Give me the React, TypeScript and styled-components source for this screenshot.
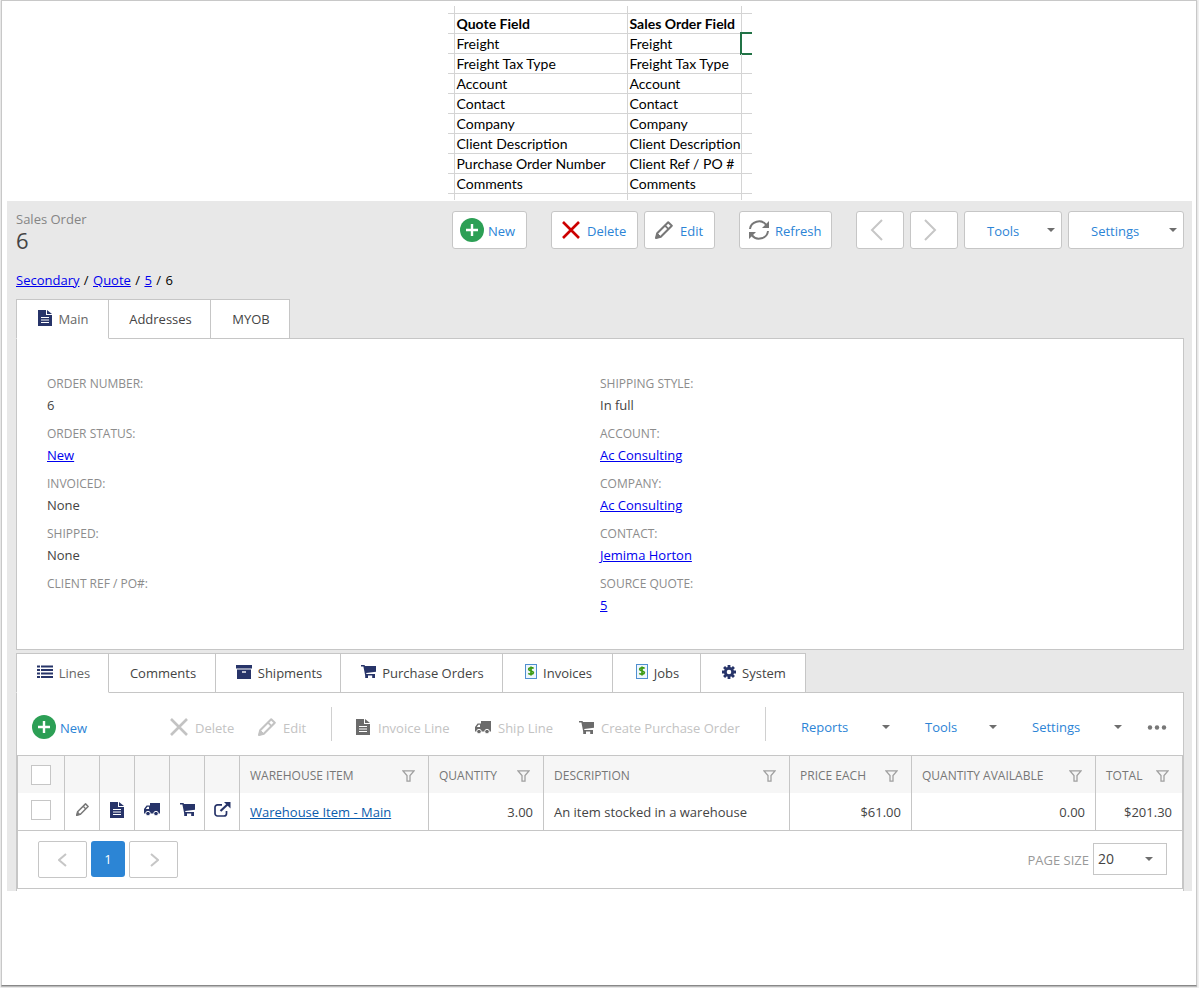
import React, { useState } from "react";
import styled, { createGlobalStyle, css } from "styled-components";

const line = "#c6c6c6";
const blue = "#2c84d6";
const navy = "#273469";

const GlobalStyle = createGlobalStyle`
  *, *::before, *::after { box-sizing: border-box; }
  body { margin: 0; background: #f0f0f0; }
  body, button, select, input {
    font-family: "Open Sans", "Noto Sans", sans-serif;
    font-size: 13px;
    line-height: 20px;
    color: #444;
  }
  a { color: #0000ee; }
`;

const Frame = styled.main`
  margin: 0 2px 2px 1px;
  min-height: calc(100vh - 2px);
  padding: 5px 4px 0 5px;
  background: #fff;
  border: 1px solid #c8c8c8;
  border-bottom-color: #888;
  box-shadow: 0 1px 1px #bbb;
`;

/* ---------- field mapping sheet ---------- */

const Sheet = styled.table`
  margin: 0 auto 1px;
  border-collapse: separate;
  border-spacing: 0;
  font-family: Lato, sans-serif;
  font-size: 14px;
  color: #000;
`;

const SheetCell = styled.td<{ $w?: number; $h?: number }>`
  position: relative;
  width: ${(p) => (p.$w ? `${p.$w}px` : "auto")};
  height: ${(p) => p.$h ?? 20}px;
  padding: 0 0 0 2px;
  border-right: 1px solid #d4d4d4;
  border-bottom: 1px solid #d4d4d4;
  line-height: 18px;
  text-align: left;
  white-space: nowrap;
  &:first-child, &:last-child { padding: 0; }
  &:last-child { border-right: 0; }
  tbody > tr:last-child > & { border-bottom: 0; }
`;

const SelectedEdge = styled.span`
  position: absolute;
  inset: -2px 0 -2px -2px;
  border: 2px solid #217346;
  border-right: 0;
`;

/* ---------- order screen ---------- */

const Screen = styled.section`
  padding: 10px 8px 0 9px;
  background: #e8e8e8;
`;

const Header = styled.header`
  display: flex;
  justify-content: space-between;
  align-items: flex-start;
  height: 58px;
`;

const Title = styled.h1`
  margin: 0;
  font-size: 22px;
  line-height: 24px;
  font-weight: 400;
  color: #444;
`;

const Kind = styled.span`
  display: block;
  font-size: 13px;
  line-height: 16px;
  margin-bottom: 1px;
  color: #858585;
`;

const Group = styled.div<{ $gap: number }>`
  display: flex;
  gap: ${(p) => p.$gap}px;
`;

const Button = styled.button<{ $w: number; $menu?: boolean }>`
  display: flex;
  align-items: center;
  justify-content: ${(p) => (p.$menu ? "space-between" : "flex-start")};
  gap: 7px;
  width: ${(p) => p.$w}px;
  height: 38px;
  padding: ${(p) => (p.$menu ? "0 6px 0 22px" : "0 0 0 10px")};
  background: #fff;
  border: 1px solid ${line};
  border-radius: 3px;
  color: ${blue};
  white-space: nowrap;
  cursor: pointer;
  & > span { padding-top: 2px; }
`;

const NewButton = styled(Button)`
  gap: 4px;
  padding-left: 7px;
`;

const RefreshButton = styled(Button)`
  gap: 6px;
  padding-left: 9px;
`;

const StepButton = styled(Button)`
  justify-content: center;
  padding: 0 7px 0 0;
`;

const Crumbs = styled.nav`
  height: 30px;
  line-height: 22px;
  color: #000;
`;

const Slash = styled.span`
  margin: 0 1px;
`;

const Tabs = styled.div`
  display: flex;
  margin-bottom: -1px;
`;

const Tab = styled.button<{ $w: number; $active?: boolean }>`
  display: flex;
  align-items: center;
  justify-content: center;
  gap: 6px;
  width: ${(p) => p.$w}px;
  height: 40px;
  padding: 0 0 0 2px;
  background: #fff;
  border: 1px solid ${line};
  white-space: nowrap;
  cursor: pointer;
  & + & { margin-left: -1px; }
  & svg { margin-top: -3px; }
  ${(p) =>
    p.$active &&
    css`
      position: relative;
      border-bottom-color: #fff;
      color: #666;
    `}
`;

const Details = styled.div`
  display: grid;
  grid-template-columns: 1fr 1fr;
  margin-bottom: 3px;
  padding: 30px;
  background: #fff;
  border: 1px solid ${line};
`;

const FieldList = styled.dl`
  margin: 0;
`;

const Field = styled.div`
  height: 50px;
  padding-top: 4px;
`;

const FieldName = styled.dt`
  font-size: 12px;
  line-height: 22px;
  color: #8c8c8c;
`;

const FieldValue = styled.dd`
  margin: 0;
  line-height: 20px;
`;

const Lines = styled.div`
  padding-bottom: 2px;
  background: #fff;
  border: 1px solid ${line};
  border-bottom: 0;
`;

const LineBar = styled.div`
  display: flex;
  align-items: center;
  height: 62px;
  padding: 6px 16px 0 15px;
`;

const Spacer = styled.div`
  flex: 1;
`;

const FlatButton = styled.button<{ $w: number; $gap?: number; $menu?: boolean }>`
  display: flex;
  align-items: center;
  justify-content: ${(p) => (p.$menu ? "space-between" : "flex-start")};
  gap: ${(p) => p.$gap ?? 7}px;
  width: ${(p) => p.$w}px;
  height: 32px;
  padding: 0;
  background: none;
  border: 0;
  color: ${blue};
  white-space: nowrap;
  cursor: pointer;
  &:disabled { color: #c3c3c3; cursor: default; }
  & > span { padding-top: ${(p) => (p.$menu ? 0 : 2)}px; }
`;

const Divider = styled.div`
  width: 1px;
  height: 34px;
  margin: 0 24px 6px;
  background: #d0d0d0;
`;

const MenuRow = styled.div`
  display: flex;
  align-items: center;
  gap: 35px;
`;

const MoreButton = styled.button`
  display: flex;
  padding: 0;
  margin-left: 25px;
  background: none;
  border: 0;
  cursor: pointer;
`;

const Grid = styled.div`
  border: 1px solid ${line};
`;

const LineTable = styled.table`
  width: 100%;
  table-layout: fixed;
  border-collapse: separate;
  border-spacing: 0;
`;

const HeadCell = styled.th<{ $w?: number }>`
  width: ${(p) => (p.$w ? `${p.$w}px` : "auto")};
  height: 37px;
  padding: 2px 10px 0;
  background: #f6f6f6;
  border-right: 1px solid ${line};
  font-size: 12px;
  font-weight: 400;
  text-align: left;
  white-space: nowrap;
  color: #777;
  &:last-child { border-right: 0; padding-right: 13px; }
`;

const HeadLabel = styled.span`
  display: flex;
  justify-content: space-between;
  align-items: center;
  padding-right: 3px;
  ${HeadCell}:last-child & { padding-right: 0; }
`;

const Cell = styled.td<{ $end?: boolean; $tool?: boolean }>`
  height: 38px;
  padding: ${(p) => (p.$tool ? "0" : "0 10px")};
  border-right: 1px solid ${line};
  border-bottom: 1px solid ${line};
  text-align: ${(p) => (p.$end ? "right" : "left")};
  white-space: nowrap;
  &:last-child { border-right: 0; }
`;

const CheckCell = styled(Cell)`
  padding: 0 0 3px;
`;

const ItemLink = styled.a`
  color: #0b5cad;
`;

const RowButton = styled.button`
  display: flex;
  align-items: center;
  justify-content: center;
  width: 100%;
  height: 32px;
  padding: 0 0 4px;
  background: none;
  border: 0;
  cursor: pointer;
`;

const Check = styled.input`
  display: block;
  appearance: none;
  width: 20px;
  height: 20px;
  margin: 0 auto;
  background: #fff;
  border: 1px solid ${line};
  &:checked { background: ${blue}; }
`;

const CheckHead = styled(HeadCell)`
  padding: 0;
`;

const Pager = styled.div`
  display: flex;
  justify-content: space-between;
  align-items: center;
  height: 57px;
  padding: 0 15px 0 20px;
`;

const PageButton = styled.button<{ $current?: boolean }>`
  display: flex;
  align-items: center;
  justify-content: center;
  width: ${(p) => (p.$current ? 34 : 49)}px;
  height: ${(p) => (p.$current ? 36 : 37)}px;
  padding: 0;
  background: ${(p) => (p.$current ? "#2c85d5" : "#fff")};
  border: ${(p) => (p.$current ? "0" : `1px solid ${line}`)};
  border-radius: ${(p) => (p.$current ? 3 : 2)}px;
  color: #fff;
  cursor: pointer;
`;

const SizeLabel = styled.label`
  display: flex;
  align-items: center;
  gap: 4px;
  color: #999;
`;

const SelectBox = styled.span`
  display: grid;
  align-items: center;
  margin-bottom: 2px;
  & > * { grid-area: 1 / 1; }
  & > svg { justify-self: end; margin-right: 14px; pointer-events: none; }
`;

const Select = styled.select`
  appearance: none;
  width: 74px;
  height: 32px;
  padding: 0 4px;
  background: #fff;
  border: 1px solid ${line};
  border-radius: 0;
  font-size: 14px;
`;

/* ---------- icons ---------- */

const PlusIcon = () => (
  <svg width="24" height="24" viewBox="0 0 24 24" aria-hidden="true">
    <circle cx="12" cy="12" r="12" fill="#2c9f55" />
    <path d="M12 6v12M6 12h12" stroke="#fff" strokeWidth="2.4" />
  </svg>
);

const CrossIcon = ({ color = "#cc0000" }: { color?: string }) => (
  <svg width="18" height="18" viewBox="0 0 18 18" aria-hidden="true">
    <path d="M1 1l16 16M17 1L1 17" stroke={color} strokeWidth="2.6" />
  </svg>
);

const PencilIcon = ({ color = "#777", size = 18 }: { color?: string; size?: number }) => (
  <svg width={size} height={size} viewBox="0 0 18 18" fill="none" stroke={color} aria-hidden="true">
    <path d="M2.2 12.2L13.2 1.2l3.6 3.6-11 11L1 17z" strokeWidth="2" strokeLinejoin="round" />
    <path d="M10 4.6l3.6 3.6" strokeWidth="1.8" />
    <path d="M1 17l1.2-4.8 3.6 3.6z" fill={color} strokeWidth="1" />
  </svg>
);

const RefreshIcon = () => (
  <svg width="20" height="20" viewBox="0 0 20 20" fill="none" stroke="#777" strokeWidth="2" aria-hidden="true">
    <path d="M1 9a9 8.4 0 0 1 16.2-4.2M19 11a9 8.4 0 0 1-16.2 4.2" />
    <path d="M20 1v7h-7zM0 19v-7h7z" fill="#777" stroke="none" />
  </svg>
);

const Chevron = ({ dir, size }: { dir: "left" | "right"; size: "big" | "small" }) => {
  const big = size === "big";
  return (
    <svg width={big ? 13 : 10} height={big ? 22 : 14} viewBox={big ? "0 0 13 22" : "0 0 10 14"} aria-hidden="true">
      <path
        d={
          big
            ? dir === "left" ? "M12 1L2 11l10 10" : "M1 1l10 10L1 21"
            : dir === "left" ? "M8 1L1 7l7 6" : "M2 1l7 6-7 6"
        }
        fill="none"
        stroke="#c6c6c6"
        strokeWidth="2"
      />
    </svg>
  );
};

const Caret = () => (
  <svg width="8" height="4" viewBox="0 0 8 4" aria-hidden="true">
    <path d="M0 0h8L4 4z" fill="#6e6e6e" />
  </svg>
);

const FileIcon = ({ color = navy }: { color?: string }) => (
  <svg width="14" height="16" viewBox="0 0 14 16" aria-hidden="true">
    <path d="M0 0h8v5h6v11H0zM9 0l5 4H9z" fill={color} />
    <path d="M3 7.5h8M3 10h8M3 12.5h8" stroke="#fff" strokeWidth="1" />
  </svg>
);

const ListIcon = () => (
  <svg width="16" height="13" viewBox="0 0 16 13" aria-hidden="true">
    <path d="M0 1.5h3M0 5h3M0 8.5h3M0 12h3M4 1.5h12M4 5h12M4 8.5h12M4 12h12" stroke={navy} strokeWidth="2" />
  </svg>
);

const BoxIcon = () => (
  <svg width="16" height="14" viewBox="0 0 16 14" aria-hidden="true">
    <path d="M0 0h16v3.6H0zM1 4.6h14V14H1z" fill={navy} />
    <path d="M6 7h4" stroke="#fff" strokeWidth="1.4" />
  </svg>
);

const CartIcon = ({ color = navy }: { color?: string }) => (
  <svg width="15" height="13" viewBox="0 0 15 13" fill={color} aria-hidden="true">
    <path d="M0 0h3.6l.3 1H15v5.8L5.2 8l.2 1H14v1.4H4.2L2.4 1.4H0z" />
    <path d="M4.2 10H7v3H4.200zM11.2 10H14v3h-2.800z" />
  </svg>
);

const TruckIcon = ({ color = navy }: { color?: string }) => (
  <svg width="16" height="13" viewBox="0 0 16 13" aria-hidden="true">
    <path d="M6 0h10v10.5H0V6l2.6-3.5H6z" fill={color} />
    <path d="M1.8 6l1.6-2.2H5V6z" fill="#fff" />
    <circle cx="4" cy="10.6" r="2.3" fill={color} stroke="#fff" strokeWidth="1" />
    <circle cx="12" cy="10.6" r="2.3" fill={color} stroke="#fff" strokeWidth="1" />
  </svg>
);

const OpenIcon = () => (
  <svg width="17" height="15" viewBox="0 0 17 15" aria-hidden="true">
    <path
      d="M8 2.8H3.5A2.5 2.5 0 0 0 1 5.300v6.200A2.500 2.500 0 0 0 3.500 14H10a2.500 2.500 0 0 0 2.500-2.500V9"
      fill="none"
      stroke={navy}
      strokeWidth="1.7"
    />
    <path d="M6.5 9L14 2" stroke={navy} strokeWidth="2.2" />
    <path d="M10 0h6.500v6.500z" fill={navy} />
  </svg>
);

const MoneyIcon = () => (
  <svg width="12" height="16" viewBox="0 0 12 16" aria-hidden="true">
    <rect x=".5" y=".5" width="11" height="14" fill="#eef6fd" stroke="#4f8fd0" />
    <path
      d="M8.600 4.500C7.500 3.400 3.700 3.300 3.700 5.300c0 2.100 4.700 1.300 4.700 3.300 0 1.900-3.600 2-5.100.8M6 2.400v9.200"
      fill="none"
      stroke="#3c9a12"
      strokeWidth="1.7"
    />
  </svg>
);

const GearIcon = () => (
  <svg width="14" height="14" viewBox="0 0 14 14" fill="none" stroke={navy} aria-hidden="true">
    <circle cx="7" cy="7" r="3.7" strokeWidth="2.8" />
    <path
      d="M7 0v3M7 11v3M0 7h3M11 7h3M2.050 2.050l2 2M9.950 9.950l2 2M11.950 2.050l-2 2M4.050 9.950l-2 2"
      strokeWidth="2.8"
    />
  </svg>
);

const FunnelIcon = () => (
  <svg width="13" height="12" viewBox="0 0 13 12" aria-hidden="true">
    <path d="M1 .8h11L8 5.500v5.700H5V5.500z" fill="none" stroke="#a0a0a0" strokeWidth="1.3" />
  </svg>
);

const DotsIcon = () => (
  <svg width="20" height="5" viewBox="0 0 20 5" fill="#777" aria-hidden="true">
    <circle cx="3" cy="2.5" r="2.2" />
    <circle cx="10" cy="2.5" r="2.2" />
    <circle cx="17" cy="2.5" r="2.2" />
  </svg>
);

/* ---------- data ---------- */

const mapping = [
  ["Freight", "Freight"],
  ["Freight Tax Type", "Freight Tax Type"],
  ["Account", "Account"],
  ["Contact", "Contact"],
  ["Company", "Company"],
  ["Client Description", "Client Description"],
  ["Purchase Order Number", "Client Ref / PO #"],
  ["Comments", "Comments"],
];

type FieldData = { name: string; value: string; link?: boolean };

const leftFields: FieldData[] = [
  { name: "ORDER NUMBER:", value: "6" },
  { name: "ORDER STATUS:", value: "New", link: true },
  { name: "INVOICED:", value: "None" },
  { name: "SHIPPED:", value: "None" },
  { name: "CLIENT REF / PO#:", value: "" },
];

const rightFields: FieldData[] = [
  { name: "SHIPPING STYLE:", value: "In full" },
  { name: "ACCOUNT:", value: "Ac Consulting", link: true },
  { name: "COMPANY:", value: "Ac Consulting", link: true },
  { name: "CONTACT:", value: "Jemima Horton", link: true },
  { name: "SOURCE QUOTE:", value: "5", link: true },
];

type TabData = { label: string; w: number; icon?: React.ReactNode };

const orderTabs: TabData[] = [
  { label: "Main", w: 93, icon: <FileIcon /> },
  { label: "Addresses", w: 103 },
  { label: "MYOB", w: 80 },
];

const lineTabs: TabData[] = [
  { label: "Lines", w: 93, icon: <ListIcon /> },
  { label: "Comments", w: 108 },
  { label: "Shipments", w: 126, icon: <BoxIcon /> },
  { label: "Purchase Orders", w: 163, icon: <CartIcon /> },
  { label: "Invoices", w: 111, icon: <MoneyIcon /> },
  { label: "Jobs", w: 89, icon: <MoneyIcon /> },
  { label: "System", w: 106, icon: <GearIcon /> },
];

const columns = [
  { label: "WAREHOUSE ITEM", w: 189 },
  { label: "QUANTITY", w: 115 },
  { label: "DESCRIPTION" },
  { label: "PRICE EACH", w: 122 },
  { label: "QUANTITY AVAILABLE", w: 184 },
  { label: "TOTAL", w: 86 },
];

const rowTools = [
  { label: "Edit line", icon: <PencilIcon size={13} /> },
  { label: "Invoice line", icon: <FileIcon /> },
  { label: "Ship line", icon: <TruckIcon /> },
  { label: "Create purchase order", icon: <CartIcon /> },
  { label: "Open line", icon: <OpenIcon /> },
];

/* ---------- parts ---------- */

const TabStrip = ({ tabs, label }: { tabs: TabData[]; label: string }) => {
  const [active, setActive] = useState(0);
  return (
    <Tabs role="tablist" aria-label={label}>
      {tabs.map((t, i) => (
        <Tab
          key={t.label}
          type="button"
          role="tab"
          aria-selected={i === active}
          $w={t.w}
          $active={i === active}
          onClick={() => setActive(i)}
        >
          {t.icon}
          <span>{t.label}</span>
        </Tab>
      ))}
    </Tabs>
  );
};

const Fields = ({ items }: { items: FieldData[] }) => (
  <FieldList>
    {items.map((f) => (
      <Field key={f.name}>
        <FieldName>{f.name}</FieldName>
        <FieldValue>{f.link ? <a href="#">{f.value}</a> : f.value}</FieldValue>
      </Field>
    ))}
  </FieldList>
);

const FieldSheet = () => (
  <Sheet>
    <thead>
      <tr>
        <SheetCell $w={7} $h={8} />
        <SheetCell $w={173} $h={8} />
        <SheetCell $w={114} $h={8} />
        <SheetCell $w={10} $h={8} />
      </tr>
      <tr>
        <SheetCell />
        <SheetCell as="th" scope="col">Quote Field</SheetCell>
        <SheetCell as="th" scope="col">Sales Order Field</SheetCell>
        <SheetCell />
      </tr>
    </thead>
    <tbody>
      {mapping.map(([from, to], i) => (
        <tr key={from}>
          <SheetCell />
          <SheetCell>{from}</SheetCell>
          <SheetCell>{to}</SheetCell>
          <SheetCell>{i === 0 && <SelectedEdge />}</SheetCell>
        </tr>
      ))}
      <tr>
        <SheetCell $h={6} />
        <SheetCell $h={6} />
        <SheetCell $h={6} />
        <SheetCell $h={6} />
      </tr>
    </tbody>
  </Sheet>
);

export default function App() {
  return (
    <>
      <GlobalStyle />
      <Frame>
        <FieldSheet />
        <Screen>
          <Header>
            <Title>
              <Kind>Sales Order</Kind>6
            </Title>
            <Group $gap={24}>
              <NewButton type="button" $w={75}><PlusIcon /><span>New</span></NewButton>
              <Group $gap={6}>
                <Button type="button" $w={87}><CrossIcon /><span>Delete</span></Button>
                <Button type="button" $w={71}><PencilIcon /><span>Edit</span></Button>
              </Group>
              <RefreshButton type="button" $w={93}><RefreshIcon /><span>Refresh</span></RefreshButton>
              <Group $gap={6}>
                <StepButton type="button" $w={48} aria-label="Previous order">
                  <Chevron dir="left" size="big" />
                </StepButton>
                <StepButton type="button" $w={48} aria-label="Next order">
                  <Chevron dir="right" size="big" />
                </StepButton>
                <Button type="button" $w={98} $menu aria-haspopup="menu"><span>Tools</span><Caret /></Button>
                <Button type="button" $w={116} $menu aria-haspopup="menu"><span>Settings</span><Caret /></Button>
              </Group>
            </Group>
          </Header>
          <Crumbs aria-label="Breadcrumb">
            <a href="#">Secondary</a> <Slash>/</Slash> <a href="#">Quote</a> <Slash>/</Slash>{" "}
            <a href="#">5</a> <Slash>/</Slash> 6
          </Crumbs>

          <TabStrip tabs={orderTabs} label="Order" />
          <Details>
            <Fields items={leftFields} />
            <Fields items={rightFields} />
          </Details>

          <TabStrip tabs={lineTabs} label="Order records" />
          <Lines>
            <LineBar>
              <FlatButton type="button" $w={138} $gap={4}><PlusIcon /><span>New</span></FlatButton>
              <FlatButton type="button" disabled $w={88}><CrossIcon color="#c3c3c3" /><span>Delete</span></FlatButton>
              <FlatButton type="button" disabled $w={49}><PencilIcon color="#c3c3c3" /><span>Edit</span></FlatButton>
              <Divider />
              <FlatButton type="button" disabled $w={119} $gap={8}><FileIcon color="#6b6b6b" /><span>Invoice Line</span></FlatButton>
              <FlatButton type="button" disabled $w={104}><TruckIcon color="#6b6b6b" /><span>Ship Line</span></FlatButton>
              <FlatButton type="button" disabled $w={162}><CartIcon color="#6b6b6b" /><span>Create Purchase Order</span></FlatButton>
              <Divider />
              <Spacer />
              <MenuRow>
                <FlatButton type="button" $w={89} $menu aria-haspopup="menu"><span>Reports</span><Caret /></FlatButton>
                <FlatButton type="button" $w={72} $menu aria-haspopup="menu"><span>Tools</span><Caret /></FlatButton>
                <FlatButton type="button" $w={90} $menu aria-haspopup="menu"><span>Settings</span><Caret /></FlatButton>
              </MenuRow>
              <MoreButton type="button" aria-label="More actions"><DotsIcon /></MoreButton>
            </LineBar>

            <Grid>
              <LineTable>
                <thead>
                  <tr>
                    <CheckHead $w={47}><Check type="checkbox" aria-label="Select all lines" /></CheckHead>
                    {rowTools.map((t) => (
                      <HeadCell key={t.label} $w={35} />
                    ))}
                    {columns.map((c) => (
                      <HeadCell key={c.label} scope="col" $w={c.w}>
                        <HeadLabel>{c.label}<FunnelIcon /></HeadLabel>
                      </HeadCell>
                    ))}
                  </tr>
                </thead>
                <tbody>
                  <tr>
                    <CheckCell><Check type="checkbox" aria-label="Select line" /></CheckCell>
                    {rowTools.map((t) => (
                      <Cell key={t.label} $tool>
                        <RowButton type="button" aria-label={t.label}>{t.icon}</RowButton>
                      </Cell>
                    ))}
                    <Cell><ItemLink href="#">Warehouse Item - Main</ItemLink></Cell>
                    <Cell $end>3.00</Cell>
                    <Cell>An item stocked in a warehouse</Cell>
                    <Cell $end>$61.00</Cell>
                    <Cell $end>0.00</Cell>
                    <Cell $end>$201.30</Cell>
                  </tr>
                </tbody>
              </LineTable>
              <Pager>
                <Group $gap={4}>
                  <PageButton type="button" aria-label="Previous page"><Chevron dir="left" size="small" /></PageButton>
                  <PageButton type="button" $current aria-current="page">1</PageButton>
                  <PageButton type="button" aria-label="Next page"><Chevron dir="right" size="small" /></PageButton>
                </Group>
                <SizeLabel>
                  PAGE SIZE
                  <SelectBox>
                    <Select defaultValue="20">
                      <option>10</option>
                      <option>20</option>
                      <option>50</option>
                    </Select>
                    <Caret />
                  </SelectBox>
                </SizeLabel>
              </Pager>
            </Grid>
          </Lines>
        </Screen>
      </Frame>
    </>
  );
}
